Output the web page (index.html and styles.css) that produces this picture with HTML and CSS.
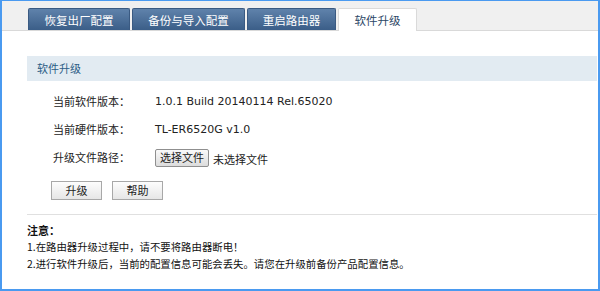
FILE: index.html
```html
<!DOCTYPE html>
<html lang="zh-CN">
<head>
    <meta charset="UTF-8">
    <title>软件升级</title>
    <link rel="stylesheet" href="styles.css">
</head>
<body>
    <div class="frame">
        <div class="tabbar">
            <div class="tab tab-1">恢复出厂配置</div>
            <div class="tab tab-2">备份与导入配置</div>
            <div class="tab tab-3">重启路由器</div>
            <div class="tab tab-active">软件升级</div>
        </div>

        <div class="content">
            <div class="panel-head">软件升级</div>

            <div class="rows">
                <div class="row">
                    <span class="label">当前软件版本：</span>
                    <span class="value">1.0.1 Build 20140114 Rel.65020</span>
                </div>
                <div class="row">
                    <span class="label">当前硬件版本：</span>
                    <span class="value">TL-ER6520G v1.0</span>
                </div>
                <div class="row">
                    <span class="label">升级文件路径：</span>
                    <span class="file-btn">选择文件</span>
                    <span class="file-name">未选择文件</span>
                </div>
            </div>

            <div class="actions">
                <span class="btn">升级</span>
                <span class="btn">帮助</span>
            </div>

            <div class="notes">
                <div class="notes-title">注意：</div>
                <div class="note">1.在路由器升级过程中，请不要将路由器断电！</div>
                <div class="note">2.进行软件升级后，当前的配置信息可能会丢失。请您在升级前备份产品配置信息。</div>
            </div>
        </div>
    </div>
</body>
</html>
```

FILE: styles.css
```css
html, body {
    margin: 0;
    padding: 0;
    background: #fff;
}
body {
    font-family: "Noto Sans CJK SC", "DejaVu Sans", sans-serif;
    font-size: 11px;
    color: #222;
}
.frame {
    box-sizing: border-box;
    width: 600px;
    height: 291px;
    border: 2px solid #4a9af0;
    border-top-width: 1px;
    overflow: hidden;
}
.tabbar {
    display: flex;
    align-items: flex-end;
    gap: 2px;
    height: 29px;
    padding-left: 26px;
    background: #f0f0f0;
    border-bottom: 1px solid #d9d9d9;
}
.tab {
    box-sizing: border-box;
    height: 22px;
    line-height: 22px;
    font-size: 11.5px;
    text-align: center;
    color: #fff;
    background: linear-gradient(#5f82ab, #3b5e88);
    border: 1px solid #3a5a82;
    border-bottom: none;
    border-radius: 2px 2px 0 0;
}
.tab-1 { width: 102px; }
.tab-2 { width: 113px; }
.tab-3 { width: 89px; }
.tab-active {
    width: 79px;
    height: 23px;
    margin-bottom: -1px;
    color: #2c4766;
    background: #fff;
    border: 1px solid #dadada;
    border-bottom: none;
}
.content {
    padding: 25px 1px 0 25px;
}
.panel-head {
    height: 25px;
    line-height: 25px;
    padding-left: 10px;
    background: #e2ebf2;
    color: #2c5d86;
}
.rows {
    padding: 6px 0 2px 26px;
}
.row {
    display: flex;
    align-items: center;
    height: 28px;
}
.label {
    width: 102px;
    color: #222;
}
.value {
    font-family: "DejaVu Sans", sans-serif;
    font-size: 11px;
    color: #222;
}
.file-btn {
    box-sizing: border-box;
    height: 18px;
    line-height: 15px;
    padding: 0 4px;
    margin-top: 2px;
    border: 1px solid #8f8f8f;
    border-radius: 2px;
    background: linear-gradient(#fafafa, #dcdcdc);
}
.file-name {
    margin-left: 4px;
    margin-top: 4px;
}
.actions {
    display: flex;
    gap: 10px;
    padding: 8px 0 14px 24px;
    border-bottom: 1px solid #e0e0e0;
}
.btn {
    box-sizing: border-box;
    width: 51px;
    height: 19px;
    line-height: 17px;
    text-align: center;
    border: 1px solid #a8a8a8;
    background: linear-gradient(#fdfdfd, #e6e6e6);
}
.notes {
    padding-top: 8px;
    color: #111;
}
.notes-title {
    font-weight: bold;
    height: 15px;
    line-height: 15px;
}
.note {
    font-size: 10.4px;
    height: 17px;
    line-height: 17px;
    white-space: nowrap;
}
```
